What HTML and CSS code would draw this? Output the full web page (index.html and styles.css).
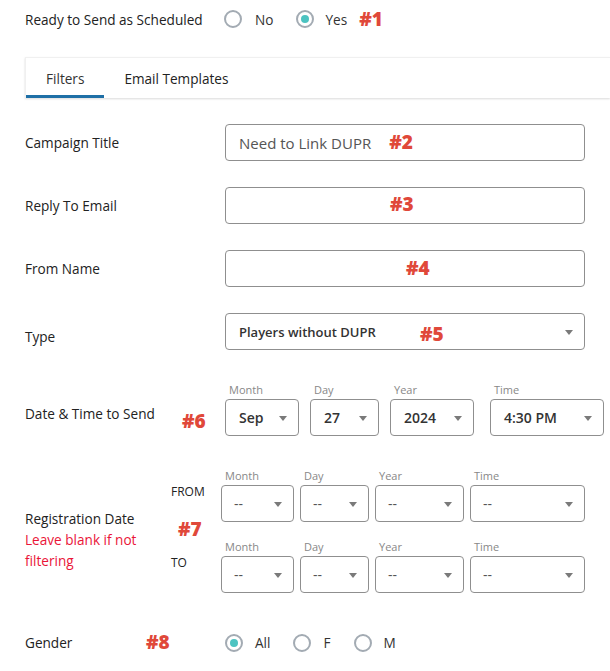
FILE: index.html
```html
<!DOCTYPE html>
<html lang="en">
<head>
    <meta charset="UTF-8">
    <title>Campaign - Filters</title>
    <link rel="stylesheet" href="styles.css">
</head>
<body>
<div class="page">

    <!-- Status -->
    <div class="status-row">
        <span class="status-label">Ready to Send as Scheduled</span>
        <span class="radio"><span class="circle"></span>No</span>
        <span class="radio last"><span class="circle checked"></span>Yes</span>
        <span class="mark mark-1">#1</span>
    </div>

    <!-- Tabs -->
    <div class="tabs">
        <div class="tab active">Filters</div>
        <div class="tab">Email Templates</div>
    </div>

    <div class="field">
        <div class="label">Campaign Title</div>
        <div class="control">
            <div class="input">Need to Link DUPR<span class="mark mark-2">#2</span></div>
        </div>
    </div>

    <div class="field">
        <div class="label">Reply To Email</div>
        <div class="control">
            <div class="input"></div>
            <span class="mark mark-3">#3</span>
        </div>
    </div>

    <div class="field">
        <div class="label">From Name</div>
        <div class="control">
            <div class="input"></div>
            <span class="mark mark-4">#4</span>
        </div>
    </div>

    <div class="field field-type">
        <div class="label">Type</div>
        <div class="control">
            <div class="select select-big">Players without DUPR</div>
            <span class="mark mark-5">#5</span>
        </div>
    </div>

    <div class="field field-date">
        <div class="label">Date &amp; Time to Send</div>
        <div class="control date-group">
            <div class="part w-74"><div class="small">Month</div><div class="select">Sep</div></div>
            <div class="part w-69"><div class="small">Day</div><div class="select">27</div></div>
            <div class="part w-84"><div class="small">Year</div><div class="select">2024</div></div>
            <div class="part w-114 ml-5"><div class="small">Time</div><div class="select">4:30 PM</div></div>
        </div>
        <span class="mark mark-6">#6</span>
    </div>

    <div class="field field-reg">
        <div class="label reg-label">
            Registration Date
            <div class="note">Leave blank if not filtering</div>
        </div>
        <div class="reg-rows">
            <div class="reg-row">
                <div class="tag">FROM</div>
                <div class="reg-group">
                    <div class="part w-73"><div class="small">Month</div><div class="select empty">--</div></div>
                    <div class="part w-69"><div class="small">Day</div><div class="select empty">--</div></div>
                    <div class="part w-89"><div class="small">Year</div><div class="select empty">--</div></div>
                    <div class="part w-115"><div class="small">Time</div><div class="select empty">--</div></div>
                </div>
            </div>
            <div class="reg-row">
                <div class="tag">TO</div>
                <div class="reg-group">
                    <div class="part w-73"><div class="small">Month</div><div class="select empty">--</div></div>
                    <div class="part w-69"><div class="small">Day</div><div class="select empty">--</div></div>
                    <div class="part w-89"><div class="small">Year</div><div class="select empty">--</div></div>
                    <div class="part w-115"><div class="small">Time</div><div class="select empty">--</div></div>
                </div>
            </div>
        </div>
        <span class="mark mark-7">#7</span>
    </div>

    <div class="field field-gender">
        <div class="label">Gender</div>
        <div class="control radios">
            <span class="radio"><span class="circle checked"></span>All</span>
            <span class="radio"><span class="circle"></span>F</span>
            <span class="radio"><span class="circle"></span>M</span>
        </div>
        <span class="mark mark-8">#8</span>
    </div>

</div>
</body>
</html>
```

FILE: styles.css
```css
body {
    margin: 0;
    font-family: 'Open Sans', 'Noto Sans', sans-serif;
    font-size: 13.6px;
    color: #222;
    background: white;
    overflow: hidden;
}

.page {
    padding: 0 25px;
    width: 560px;
}

/* annotations */
.mark {
    font-family: 'Open Sans', sans-serif;
    font-weight: 800;
    font-size: 19px;
    color: #e0483a;
    line-height: 1;
}

.mark-1 { margin-left: 12px; }
.mark-2 { margin-left: 18px; }

.field-type .control,
.field,
.status-row {
    position: relative;
}

.mark-3, .mark-4, .mark-5, .mark-6, .mark-7, .mark-8 {
    position: absolute;
}

.mark-3 { left: 165px; top: 8px; }
.mark-4 { left: 181px; top: 9px; }
.mark-5 { left: 195px; top: 12px; }
.mark-6 { left: 157px; top: 29px; }
.mark-7 { left: 153px; top: 51px; }
.mark-8 { left: 121px; top: 0px; }

/* status row */
.status-row {
    display: flex;
    align-items: center;
    height: 38px;
}

.status-label {
    width: 199px;
}

.radio {
    display: inline-flex;
    align-items: center;
    margin-right: 23px;
    color: #333;
}

.radio.last {
    margin-right: 0;
}

.circle {
    width: 14px;
    height: 14px;
    border: 2px solid #a3abb3;
    border-radius: 50%;
    margin-right: 13px;
    display: inline-flex;
    align-items: center;
    justify-content: center;
}

.radio.last .circle {
    margin-right: 11px;
}

.circle.checked::after {
    content: '';
    width: 8px;
    height: 8px;
    border-radius: 50%;
    background: #4cc3c1;
}

/* tabs */
.tabs {
    display: flex;
    height: 41px;
    width: 585px;
    margin-top: 19px;
    border-top: 1px solid #f0f0f0;
    border-left: 1px solid #f0f0f0;
    box-shadow: 0 1px 2px rgba(0,0,0,0.15);
    box-sizing: border-box;
}

.tab {
    padding: 0 20px;
    display: flex;
    align-items: center;
    color: #222;
}

.tab.active {
    color: #333;
    border-bottom: 3px solid #1e6fa6;
    padding-top: 3px;
}

/* form fields */
.field {
    display: flex;
    align-items: center;
    margin-top: 26px;
}

.label {
    width: 200px;
    flex-shrink: 0;
}

.control {
    flex: 1;
    position: relative;
}

.input {
    height: 35px;
    border: 1px solid #8f8f8f;
    border-radius: 4px;
    padding: 0 13px;
    display: flex;
    align-items: center;
    font-size: 15px;
    color: #555;
}

.field-type .label {
    padding-top: 9px;
}

.select {
    position: relative;
    height: 35px;
    border: 1px solid #8f8f8f;
    border-radius: 4px;
    padding: 0 13px;
    display: flex;
    align-items: center;
    font-size: 14px;
    font-weight: 600;
    color: #333;
}

.select::after {
    content: '';
    position: absolute;
    right: 11px;
    top: 16px;
    border-left: 4px solid transparent;
    border-right: 4px solid transparent;
    border-top: 5px solid #7a7a7a;
}

.select-big {
    font-size: 13px;
}

.small {
    font-size: 11px;
    line-height: 14px;
    color: #888;
    padding-left: 4px;
    margin-bottom: 2px;
}

/* date & time */
.field-date {
    margin-top: 33px;
}

.field-date .label {
    padding-top: 8px;
}

.date-group {
    display: flex;
    gap: 11px;
}

.w-73 { width: 73px; }
.w-74 { width: 74px; }
.w-69 { width: 69px; }
.w-84 { width: 84px; }
.w-89 { width: 89px; }
.w-114 { width: 114px; }
.w-115 { width: 115px; }
.ml-5 { margin-left: 5px; }

.part {
    flex-shrink: 0;
}

.part .select {
    box-sizing: border-box;
    width: 100%;
    height: 37px;
}

/* registration date */
.field-reg {
    margin-top: 33px;
    align-items: flex-start;
}

.reg-label {
    width: 146px;
    padding-top: 39px;
    line-height: 21px;
}

.note {
    color: #ea1538;
}

.reg-rows {
    display: flex;
    flex-direction: column;
    gap: 18px;
}

.reg-row {
    display: flex;
}

.tag {
    width: 50px;
    font-size: 12px;
    padding-top: 14px;
}

.reg-group {
    display: flex;
    gap: 6px;
}

.select.empty {
    font-weight: 400;
    color: #555;
    padding-left: 12px;
}

/* gender */
.field-gender {
    margin-top: 40px;
}

.radios {
    display: flex;
    align-items: center;
}

.radios .radio {
    margin-right: 23px;
}

.radios .circle {
    margin-right: 12px;
}
```
